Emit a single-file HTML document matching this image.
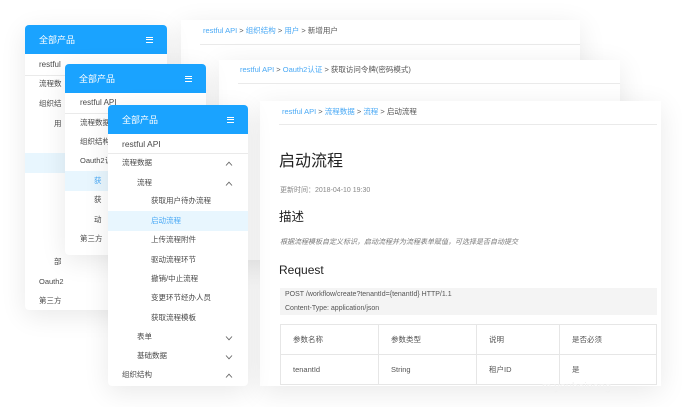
<!DOCTYPE html>
<html><head><meta charset="utf-8"><style>
*{margin:0;padding:0;box-sizing:border-box}
body{width:682px;height:407px;background:#fff;position:relative;overflow:hidden;font-family:"Liberation Sans","Noto Sans CJK SC",sans-serif;color:#333}
.p{position:absolute;background:#fff;box-shadow:0 6px 26px rgba(0,0,0,0.09)}
.side .hd{height:29px;background:#1aa3ff;border-radius:4px 4px 0 0;color:#fff;font-size:9px;padding:0 14px;display:flex;align-items:center;justify-content:space-between}
.t{position:absolute;font-size:7.5px;color:#4a4a4a;white-space:nowrap;line-height:10px}
.bc{position:absolute;font-size:7.5px;color:#555;white-space:nowrap;line-height:10px}
.bc b{font-weight:normal;color:#4aa9f5}
.ln{position:absolute;height:1px;background:#eaeaea}
.hl{position:absolute;background:#e8f6fe}
.ham{display:inline-block;width:7px;height:6px;border-top:1.3px solid #fff;border-bottom:1.3px solid #fff;position:relative}
.ham:after{content:"";position:absolute;left:0;right:0;top:1.1px;border-top:1.3px solid #fff}
.car{position:absolute;width:8px;height:5px}
td{border:1px solid #e6e6e6;font-size:7.5px;color:#555;padding-left:12px}
</style></head><body>

<!-- layer 1 -->
<div class="p" style="left:181px;top:20px;width:399px;height:200px"></div>
<div class="bc" style="left:203px;top:26px"><b>restful API</b> &gt; <b>组织结构</b> &gt; <b>用户</b> &gt; 新增用户</div>
<div class="ln" style="left:200px;top:44px;width:380px"></div>
<div class="p side" style="left:25px;top:25px;width:142px;height:285px;border-radius:4px">
 <div class="hd"><span>全部产品</span><span class="ham"></span></div>
</div>
<div class="ln" style="left:25px;top:75px;width:142px"></div>
<div class="t" style="left:39px;top:60px;font-size:8px">restful</div>
<div class="t" style="left:39px;top:79px">流程数</div>
<div class="t" style="left:39px;top:99px">组织结</div>
<div class="t" style="left:54px;top:119px">用</div>
<div class="hl" style="left:25px;top:153px;width:40px;height:20px"></div>
<div class="t" style="left:54px;top:257px">部</div>
<div class="t" style="left:39px;top:277px">Oauth2</div>
<div class="t" style="left:39px;top:296px">第三方</div>

<!-- layer 2 -->
<div class="p" style="left:219px;top:60px;width:401px;height:200px"></div>
<div class="bc" style="left:240px;top:65px"><b>restful API</b> &gt; <b>Oauth2认证</b> &gt; 获取访问令牌(密码模式)</div>
<div class="ln" style="left:238px;top:83px;width:382px"></div>
<div class="p side" style="left:65px;top:64px;width:141px;height:191px;border-radius:4px">
 <div class="hd"><span>全部产品</span><span class="ham"></span></div>
</div>
<div class="ln" style="left:65px;top:113px;width:141px"></div>
<div class="t" style="left:80px;top:98px;font-size:8px">restful API</div>
<div class="t" style="left:80px;top:118px">流程数据</div>
<div class="t" style="left:80px;top:137px">组织结构</div>
<div class="t" style="left:80px;top:156px">Oauth2认证</div>
<div class="hl" style="left:65px;top:171px;width:43px;height:20px"></div>
<div class="t" style="left:94px;top:176px;color:#4aa9f5">获</div>
<div class="t" style="left:94px;top:195px">获</div>
<div class="t" style="left:94px;top:215px">动</div>
<div class="t" style="left:80px;top:234px">第三方</div>

<!-- layer 3 content -->
<div class="p" style="left:260px;top:101px;width:401px;height:285px"></div>
<div class="bc" style="left:282px;top:107px"><b>restful API</b> &gt; <b>流程数据</b> &gt; <b>流程</b> &gt; 启动流程</div>
<div class="ln" style="left:279px;top:124px;width:378px"></div>
<div class="t" style="left:279px;top:152px;font-size:16px;line-height:20px;color:#222">启动流程</div>
<div class="t" style="left:280px;top:186px;font-size:7px;color:#888">更新时间：2018-04-10 19:30</div>
<div class="t" style="left:279px;top:209px;font-size:12.5px;line-height:16px;color:#222">描述</div>
<div class="t" style="left:280px;top:238px;font-size:7px;color:#777;font-style:italic">根据流程模板自定义标识，启动流程并为流程表单赋值，可选择是否自动提交</div>
<div class="t" style="left:279px;top:262px;font-size:12px;line-height:16px;color:#222">Request</div>
<div style="position:absolute;left:280px;top:288px;width:377px;height:27px;background:#f4f4f4"></div>
<div class="t" style="left:285px;top:290px;font-size:7px;color:#555">POST /workflow/create?tenantId={tenantId} HTTP/1.1</div>
<div class="t" style="left:285px;top:304px;font-size:7px;color:#555">Content-Type: application/json</div>
<table style="position:absolute;left:280px;top:324px;width:377px;border-collapse:collapse">
<tr style="height:30px"><td style="width:98px">参数名称</td><td style="width:98px">参数类型</td><td style="width:83px">说明</td><td>是否必须</td></tr>
<tr style="height:30px"><td>tenantId</td><td>String</td><td>租户ID</td><td>是</td></tr>
</table>
<div class="t" style="left:542px;top:382px;font-size:11px;color:#f2f2f2">m.youbeineng</div>

<!-- layer 3 side -->
<div class="p side" style="left:108px;top:105px;width:140px;height:281px;border-radius:4px">
 <div class="hd"><span>全部产品</span><span class="ham"></span></div>
</div>
<div class="ln" style="left:108px;top:153px;width:140px"></div>
<div class="t" style="left:122px;top:139px;font-size:8.5px">restful API</div>
<div class="t" style="left:122px;top:158px">流程数据</div>
<div class="t" style="left:137px;top:178px">流程</div>
<div class="t" style="left:151px;top:196px">获取用户待办流程</div>
<div class="hl" style="left:108px;top:211px;width:140px;height:20px"></div>
<div class="t" style="left:151px;top:216px;color:#4aa9f5">启动流程</div>
<div class="t" style="left:151px;top:235px">上传流程附件</div>
<div class="t" style="left:151px;top:255px">驱动流程环节</div>
<div class="t" style="left:151px;top:274px">撤销/中止流程</div>
<div class="t" style="left:151px;top:293px">变更环节经办人员</div>
<div class="t" style="left:151px;top:313px">获取流程模板</div>
<div class="t" style="left:137px;top:332px">表单</div>
<div class="t" style="left:137px;top:351px">基础数据</div>
<div class="t" style="left:122px;top:370px">组织结构</div>
<svg class="car" style="left:225px;top:161px" viewBox="0 0 8 5"><path d="M1 4.5L4 1.2L7 4.5" fill="none" stroke="#666" stroke-width="0.9"/></svg>
<svg class="car" style="left:225px;top:181px" viewBox="0 0 8 5"><path d="M1 4.5L4 1.2L7 4.5" fill="none" stroke="#666" stroke-width="0.9"/></svg>
<svg class="car" style="left:225px;top:336px" viewBox="0 0 8 5"><path d="M1 0.5L4 3.8L7 0.5" fill="none" stroke="#666" stroke-width="0.9"/></svg>
<svg class="car" style="left:225px;top:355px" viewBox="0 0 8 5"><path d="M1 0.5L4 3.8L7 0.5" fill="none" stroke="#666" stroke-width="0.9"/></svg>
<svg class="car" style="left:225px;top:373px" viewBox="0 0 8 5"><path d="M1 4.5L4 1.2L7 4.5" fill="none" stroke="#666" stroke-width="0.9"/></svg>
</body></html>
